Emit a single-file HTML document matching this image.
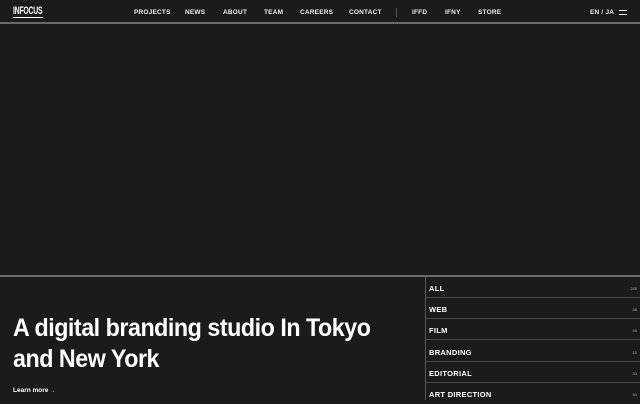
<!DOCTYPE html>
<html><head><meta charset="utf-8"><style>
*{margin:0;padding:0;box-sizing:border-box}
html,body{width:640px;height:400px;overflow:hidden;background:#1b1b1b;color:#fff;font-family:"Liberation Sans",Arial,sans-serif}
.a{position:absolute;white-space:nowrap}
.nav{top:9px;font-size:6.5px;font-weight:bold;letter-spacing:.2px;line-height:7px;color:#eee}
.hl{position:absolute;left:0;width:640px;height:2px;background:#6a6a6a}
.row{position:absolute;left:426px;width:214px;height:21px;border-bottom:1px solid #4a4a4a}
.row b{position:absolute;left:3px;top:7px;font-size:7.5px;letter-spacing:.3px}
.row i{position:absolute;right:3px;top:9px;font-size:4px;font-style:normal;color:#aaa}
</style></head><body>
<div class="a" style="left:13px;top:5px;font-size:11px;font-weight:bold;transform:scaleX(.62);transform-origin:left top;letter-spacing:-.3px">INFOCUS</div>
<div class="a" style="left:13px;top:17px;width:30px;height:1px;background:#fff"></div>
<div class="a nav" style="left:134px">PROJECTS</div>
<div class="a nav" style="left:185px">NEWS</div>
<div class="a nav" style="left:223px">ABOUT</div>
<div class="a nav" style="left:264px">TEAM</div>
<div class="a nav" style="left:300px">CAREERS</div>
<div class="a nav" style="left:349px">CONTACT</div>
<div class="a" style="left:396px;top:8px;width:1px;height:9px;background:#555"></div>
<div class="a nav" style="left:412px">IFFD</div>
<div class="a nav" style="left:445px">IFNY</div>
<div class="a nav" style="left:478px">STORE</div>
<div class="a nav" style="left:590px">EN / JA</div>
<div class="a" style="left:619px;top:10px;width:8px;height:1.3px;background:#fff"></div>
<div class="a" style="left:619px;top:14px;width:8px;height:1.3px;background:#fff"></div>
<div class="hl" style="top:22px"></div>
<div class="hl" style="top:275px"></div>
<div class="a" style="left:425px;top:277px;width:1px;height:123px;background:#555"></div>
<div class="a" style="left:13px;top:313px;font-size:25px;font-weight:bold;line-height:31px;letter-spacing:-.5px;transform:scaleX(.93);transform-origin:left top">A digital branding studio In Tokyo<br>and New York</div>
<div class="a" style="left:13px;top:387px;font-size:6.5px;font-weight:bold">Learn more <span style="font-size:5px">→</span></div>
<div class="row" style="top:277px"><b>ALL</b><i>245</i></div>
<div class="row" style="top:298px"><b>WEB</b><i>88</i></div>
<div class="row" style="top:319px"><b>FILM</b><i>55</i></div>
<div class="row" style="top:341px"><b>BRANDING</b><i>10</i></div>
<div class="row" style="top:362px"><b>EDITORIAL</b><i>33</i></div>
<div class="row" style="top:383px;border:none"><b>ART DIRECTION</b><i>54</i></div>
</body></html>
